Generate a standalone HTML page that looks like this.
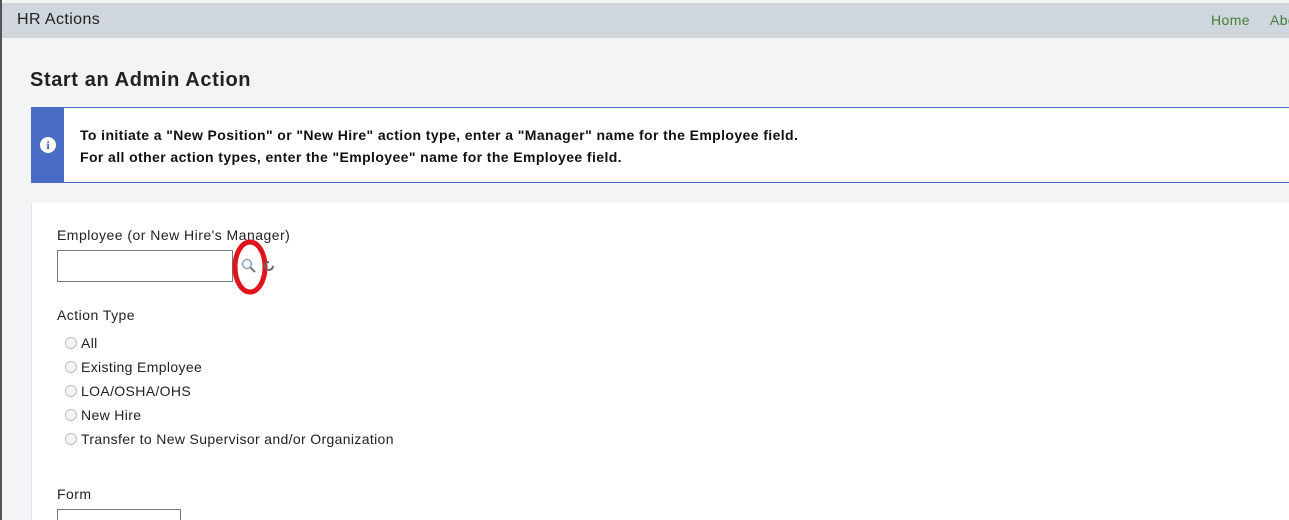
<!DOCTYPE html>
<html><head><meta charset="utf-8"><style>
*{margin:0;padding:0;box-sizing:border-box}
html,body{width:1289px;height:520px;overflow:hidden}
body{background:#f3f4f6;font-family:"Liberation Sans","DejaVu Sans",sans-serif;color:#222;position:relative}
.lb{position:absolute;left:0;top:0;width:2px;height:520px;background:#555}
.hdr{position:absolute;left:2px;top:3px;width:1287px;height:35px;background:#cfd6dd}
.hdr .t{position:absolute;left:15px;top:8px;font-size:16px;color:#222;letter-spacing:0.4px}
.nav{position:absolute;top:12px;font-size:14px;color:#4a7c3a;letter-spacing:0.4px}
h1{position:absolute;left:30px;top:69px;font-size:20px;font-weight:bold;color:#222;letter-spacing:0.6px}
.alert{position:absolute;left:31px;top:107px;width:1258px;height:76px;background:#fff;border:1px solid #4a6cc4;border-right:none}
.alert .bar{position:absolute;left:0;top:0;width:32px;height:74px;background:#4a6cc4}
.alert .ic{position:absolute;left:8px;top:29px;width:16px;height:16px;border-radius:50%;background:#fff;color:#4a6cc4;font-size:12px;font-weight:bold;text-align:center;line-height:16px;font-family:"Liberation Serif",serif}
.alert p{position:absolute;left:48px;font-size:14px;font-weight:bold;color:#111;letter-spacing:0.4px;white-space:nowrap}
.card{position:absolute;left:31px;top:203px;width:1258px;height:317px;background:#fff;border-left:1px solid #e4e6e9}
.lbl{position:absolute;left:57px;font-size:14px;color:#222;letter-spacing:0.47px}
.inp{position:absolute;left:57px;top:250px;width:176px;height:32px;border:1px solid #6f7a85;background:#fff}
.r{position:absolute;left:65px;font-size:14px;color:#222;letter-spacing:0.35px}
.r i{position:absolute;left:0;top:2px;width:12px;height:12px;border:1px solid #bbb;border-radius:50%;background:#f4f4f4}
.r span{position:absolute;left:16px;top:0;white-space:nowrap}
</style></head><body>
<div class="lb"></div>
<div class="hdr"><div class="t">HR Actions</div></div>
<div class="nav" style="left:1211px">Home</div>
<div class="nav" style="left:1270px">About</div>
<h1>Start an Admin Action</h1>
<div class="alert"><div class="bar"><div class="ic">i</div></div>
<p style="top:19px">To initiate a "New Position" or "New Hire" action type, enter a "Manager" name for the Employee field.</p>
<p style="top:41px">For all other action types, enter the "Employee" name for the Employee field.</p></div>
<div class="card"></div>
<div class="lbl" style="top:227px">Employee (or New Hire's Manager)</div>
<div class="inp"></div>
<svg style="position:absolute;left:230px;top:238px" width="50" height="60">
<ellipse cx="20" cy="29" rx="15" ry="25" fill="none" stroke="#e0141b" stroke-width="5"/>
<circle cx="17" cy="26" r="4.5" fill="#eef4fa" stroke="#8a9aaa" stroke-width="1.3"/>
<line x1="20.5" y1="29.5" x2="25" y2="34" stroke="#777" stroke-width="2"/>
<path d="M39 24 a4 4 0 1 0 4 4" fill="none" stroke="#666" stroke-width="2"/>
</svg>
<div class="lbl" style="top:307px">Action Type</div>
<div class="r" style="top:335px"><i></i><span>All</span></div>
<div class="r" style="top:359px"><i></i><span>Existing Employee</span></div>
<div class="r" style="top:383px"><i></i><span>LOA/OSHA/OHS</span></div>
<div class="r" style="top:407px"><i></i><span>New Hire</span></div>
<div class="r" style="top:431px"><i></i><span>Transfer to New Supervisor and/or Organization</span></div>
<div class="lbl" style="top:486px">Form</div>
<div style="position:absolute;left:57px;top:509px;width:124px;height:20px;border:1px solid #6f7a85;background:#fff"></div>
</body></html>
